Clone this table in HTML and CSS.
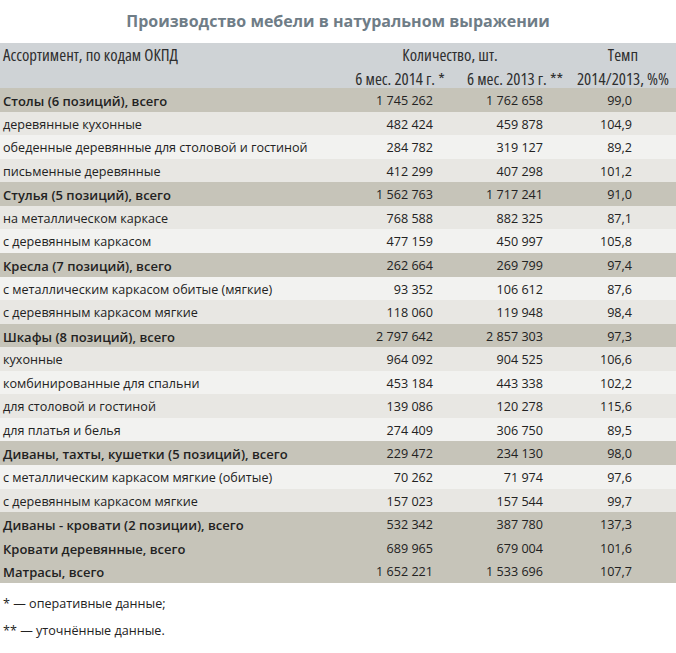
FILE: index.html
```html
<!DOCTYPE html>
<html lang="ru">
<head>
<meta charset="utf-8">
<title>Производство мебели в натуральном выражении</title>
<link rel="stylesheet" href="styles.css">
</head>
<body>
<h1 class="title">Производство мебели в натуральном выражении</h1>
<div class="table">
  <div class="head">
    <div class="h h-name">Ассортимент, по кодам ОКПД</div>
    <div class="h h-qty">Количество, шт.</div>
    <div class="h h-temp">Темп</div>
    <div class="h h-c2">6 мес. 2014 г. *</div>
    <div class="h h-c3">6 мес. 2013 г. **</div>
    <div class="h h-c4">2014/2013, %%</div>
  </div>
  <div class="row total"><span>Столы (6 позиций), всего</span><span>1 745 262</span><span>1 762 658</span><span>99,0</span></div>
  <div class="row dark"><span>деревянные кухонные</span><span>482 424</span><span>459 878</span><span>104,9</span></div>
  <div class="row light"><span>обеденные деревянные для столовой и гостиной</span><span>284 782</span><span>319 127</span><span>89,2</span></div>
  <div class="row dark"><span>письменные деревянные</span><span>412 299</span><span>407 298</span><span>101,2</span></div>
  <div class="row total"><span>Стулья (5 позиций), всего</span><span>1 562 763</span><span>1 717 241</span><span>91,0</span></div>
  <div class="row dark"><span>на металлическом каркасе</span><span>768 588</span><span>882 325</span><span>87,1</span></div>
  <div class="row light"><span>с деревянным каркасом</span><span>477 159</span><span>450 997</span><span>105,8</span></div>
  <div class="row total"><span>Кресла (7 позиций), всего</span><span>262 664</span><span>269 799</span><span>97,4</span></div>
  <div class="row light"><span>с металлическим каркасом обитые (мягкие)</span><span>93 352</span><span>106 612</span><span>87,6</span></div>
  <div class="row dark"><span>с деревянным каркасом мягкие</span><span>118 060</span><span>119 948</span><span>98,4</span></div>
  <div class="row total"><span>Шкафы (8 позиций), всего</span><span>2 797 642</span><span>2 857 303</span><span>97,3</span></div>
  <div class="row dark"><span>кухонные</span><span>964 092</span><span>904 525</span><span>106,6</span></div>
  <div class="row light"><span>комбинированные для спальни</span><span>453 184</span><span>443 338</span><span>102,2</span></div>
  <div class="row dark"><span>для столовой и гостиной</span><span>139 086</span><span>120 278</span><span>115,6</span></div>
  <div class="row light"><span>для платья и белья</span><span>274 409</span><span>306 750</span><span>89,5</span></div>
  <div class="row total"><span>Диваны, тахты, кушетки (5 позиций), всего</span><span>229 472</span><span>234 130</span><span>98,0</span></div>
  <div class="row light"><span>с металлическим каркасом мягкие (обитые)</span><span>70 262</span><span>71 974</span><span>97,6</span></div>
  <div class="row dark"><span>с деревянным каркасом мягкие</span><span>157 023</span><span>157 544</span><span>99,7</span></div>
  <div class="row total"><span>Диваны - кровати (2 позиции), всего</span><span>532 342</span><span>387 780</span><span>137,3</span></div>
  <div class="row total"><span>Кровати деревянные, всего</span><span>689 965</span><span>679 004</span><span>101,6</span></div>
  <div class="row total"><span>Матрасы, всего</span><span>1 652 221</span><span>1 533 696</span><span>107,7</span></div>
</div>
<div class="notes">
  <p>* — оперативные данные;</p>
  <p>** — уточнённые данные.</p>
</div>
</body>
</html>
```

FILE: styles.css
```css
html, body {
  margin: 0;
  padding: 0;
  background: #ffffff;
}
body {
  font-family: "Open Sans", "Noto Sans", sans-serif;
  color: #222222;
  width: 676px;
}
.title {
  margin: 0;
  height: 43px;
  line-height: 42px;
  text-align: center;
  font-size: 16px;
  font-weight: 700;
  color: #6f7d87;
}
.table {
  display: flex;
  flex-direction: column;
}
.head {
  display: grid;
  grid-template-columns: 340px 120px 110px 1fr;
  grid-template-rows: 22.5px 22.5px;
  background: #cfd3d6;
  font-stretch: 75%;
  font-size: 16.8px;
  color: #2e2e2e;
}
.h {
  line-height: 22px;
  padding-top: 1px;
  white-space: nowrap;
}
.h-c2, .h-c3, .h-c4 { padding-top: 2px; }
.h-name { padding-left: 3px; }
.h-qty { grid-column: 2 / 4; text-align: center; padding-right: 10px; }
.h-temp { text-align: center; }
.h-c2 { grid-row: 2; grid-column: 2; text-align: center; }
.h-c3 { grid-row: 2; grid-column: 3; text-align: center; }
.h-c4 { grid-row: 2; grid-column: 4; text-align: center; }
.row {
  display: grid;
  grid-template-columns: 340px 120px 110px 1fr;
  height: 23.57px;
  line-height: 24px;
  font-size: 12.6px;
  white-space: nowrap;
}
.row span { padding-top: 1px; }
.row span:first-child { padding-left: 3px; }
.row span:nth-child(2) { text-align: right; padding-right: 27px; }
.row span:nth-child(3) { text-align: right; padding-right: 27px; }
.row span:nth-child(4) { text-align: right; padding-right: 44px; }
.total {
  background: #c6c4b9;
}
.total span:first-child {
  font-weight: 600;
  font-size: 13px;
}
.dark { background: #e8e7e3; }
.light { background: #f2f2f0; }
.notes {
  padding: 7px 0 0 3px;
  font-size: 12.6px;
}
.notes p {
  margin: 0;
  line-height: 27px;
}
```
